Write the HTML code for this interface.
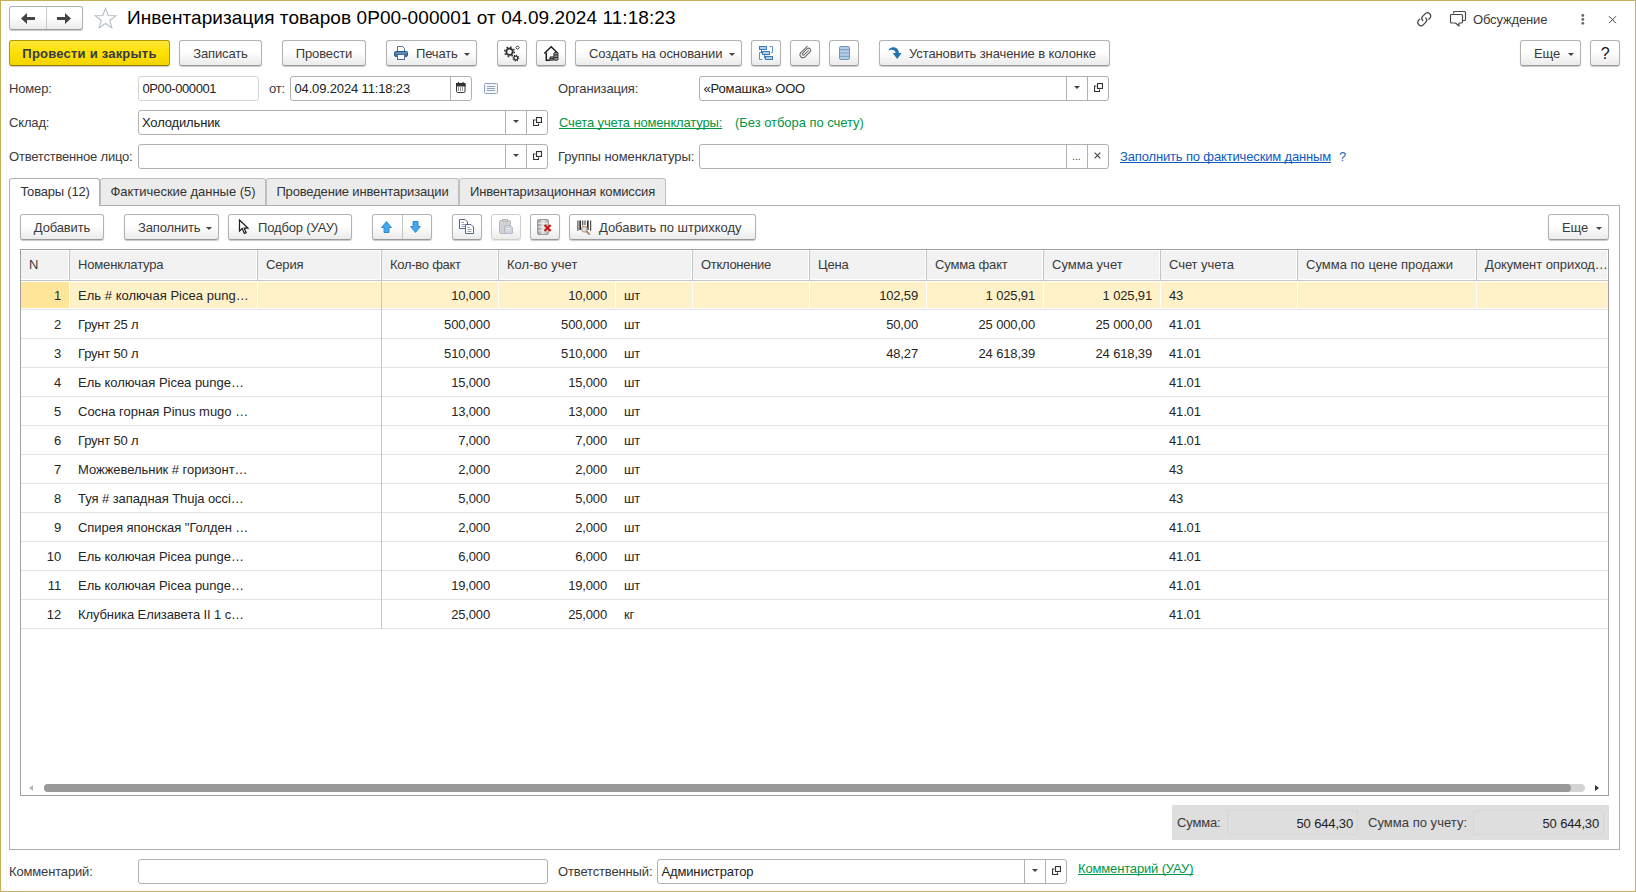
<!DOCTYPE html>
<html lang="ru">
<head>
<meta charset="utf-8">
<title>Инвентаризация товаров 0Р00-000001 от 04.09.2024 11:18:23</title>
<style>
*{box-sizing:border-box;margin:0;padding:0}
html,body{width:1636px;height:892px;overflow:hidden;background:#fff}
body{font-family:"Liberation Sans",sans-serif;font-size:13px;color:#333;position:relative;letter-spacing:-0.15px}
#frame{position:absolute;left:0;top:0;width:1636px;height:892px;border:1px solid #c2b05a;pointer-events:none;z-index:50}
.abs{position:absolute}
.lbl{position:absolute;height:24px;line-height:26px;white-space:nowrap;color:#3a3a3a}
.btn{position:absolute;height:26px;border:1px solid #b2b2b2;border-bottom-color:#9a9a9a;border-radius:3px;background:linear-gradient(#fff 0%,#fff 45%,#ebebeb 100%);box-shadow:0 1px 1px rgba(0,0,0,.22);line-height:26px;text-align:center;white-space:nowrap;color:#3a3a3a}
.btn.def{background:linear-gradient(#ffe93a 0%,#ffe000 50%,#f3d400 100%);border-color:#ad9a00;border-bottom-color:#8f7f00;font-weight:bold;color:#363a4a}
.btn svg{position:absolute}
.btn .t{position:absolute;top:0;height:24px;line-height:26px}
.arr{position:absolute;width:0;height:0;border-left:3.5px solid transparent;border-right:3.5px solid transparent;border-top:3.5px solid #444}
.inp{position:absolute;height:25px;border:1px solid #b0b0b0;border-radius:3px;background:#fff;line-height:23px;padding-left:3.5px;white-space:nowrap;color:#222;overflow:hidden}
.inp .sep{position:absolute;top:0;width:1px;height:23px;background:#b0b0b0}
.inp svg,.inp .arr{position:absolute}
a.g{position:absolute;color:#009646;text-decoration:underline;text-decoration-skip-ink:none;white-space:nowrap;height:24px;line-height:26px}
a.b{position:absolute;color:#0e5bbf;text-decoration:underline;text-decoration-skip-ink:none;white-space:nowrap;height:24px;line-height:26px}
.tab{position:absolute;top:178px;height:27px;border:1px solid #c0c0c0;border-bottom:none;background:#ececec;line-height:26px;text-align:center;white-space:nowrap;color:#333;border-radius:3px 3px 0 0}
.tab.act{background:#fff;height:28px;z-index:3;border-color:#b0b0b0}
#panel{position:absolute;left:9px;top:205px;width:1611px;height:645px;border:1px solid #b0b0b0;background:#fff}
#tbl{position:absolute;left:20px;top:249px;width:1589px;height:547px;border:1px solid #a0a0a0;background:#fff}
#thead{position:absolute;left:21px;top:250px;width:1587px;height:31px;background:#fff;border-bottom:1px solid #c6c6c6}
.th{position:absolute;top:251px;height:28px;line-height:27px;padding-left:8px;background:#f2f2f2;color:#3a3a3a;white-space:nowrap;overflow:hidden}
.vsep{position:absolute;top:250px;width:1px;height:31px;background:#c6c6c6}
.tr{position:absolute;left:21px;width:1587px;height:29px;border-bottom:1px solid #e2e2e2}
.td{position:absolute;top:1px;height:26px;line-height:28px;padding:0 8px;white-space:nowrap;overflow:hidden;color:#262626}
.td.r{text-align:right}
.tr.sel .td{background:#fff2c8}
.tr.sel .td.first{background:#ffe59a}
#fixline{position:absolute;left:381px;top:250px;width:1px;height:379px;background:#c6c6c6;z-index:4}
</style>
</head>
<body>
<!-- title bar -->
<div class="btn" style="left:9px;top:6px;width:74px;height:24px">
  <div class="abs" style="left:36px;top:0;width:1px;height:22px;background:#c9c9c9"></div>
  <svg style="left:11px;top:6px" width="14" height="11" viewBox="0 0 14 11"><path d="M0 5.5 L6 0 V4 H14 V7 H6 V11 Z" fill="#444"/></svg>
  <svg style="left:47px;top:6px" width="14" height="11" viewBox="0 0 14 11"><path d="M14 5.5 L8 0 V4 H0 V7 H8 V11 Z" fill="#444"/></svg>
</div>
<svg class="abs" style="left:94px;top:7px" width="23" height="22" viewBox="0 0 25 24"><path d="M12.5 1.5 L15.4 9.3 L23.6 9.6 L17.1 14.7 L19.4 22.6 L12.5 18 L5.6 22.6 L7.9 14.7 L1.4 9.6 L9.6 9.3 Z" fill="#fff" stroke="#b4bcc6" stroke-width="1.15" stroke-linejoin="miter"/></svg>
<div class="abs" id="title" style="left:127px;top:6px;height:24px;line-height:24px;font-size:19px;color:#000;white-space:nowrap;letter-spacing:0.08px">Инвентаризация товаров 0Р00-000001 от 04.09.2024 11:18:23</div>

<svg class="abs" style="left:1414.500px;top:10px" width="18.500" height="18.500" viewBox="0 0 17 17" fill="none" stroke="#4a4a4a" stroke-width="1.15" stroke-linecap="round"><path d="M7.2 9.8 a3 3 0 0 1 0 -4.2 l2.4 -2.4 a3 3 0 0 1 4.2 4.2 l-1.2 1.2"/><path d="M9.8 7.2 a3 3 0 0 1 0 4.2 l-2.4 2.4 a3 3 0 0 1 -4.2 -4.2 l1.2 -1.2"/></svg>
<svg class="abs" style="left:1449px;top:10px" width="18" height="18" viewBox="0 0 18 18" fill="none" stroke="#4a4a4a" stroke-width="1.2" stroke-linejoin="round"><path d="M4.5 3.5 V2.5 a1 1 0 0 1 1 -1 h10 a1 1 0 0 1 1 1 v7 a1 1 0 0 1 -1 1 h-1.5"/><path d="M2.5 4.5 h10 a1 1 0 0 1 1 1 v6.5 a1 1 0 0 1 -1 1 h-2.5 v3 l-3.5 -3 h-4 a1 1 0 0 1 -1 -1 v-6.5 a1 1 0 0 1 1 -1 z" fill="#fff"/></svg>
<div class="lbl" style="left:1473px;top:7px;color:#3a3a3a">Обсуждение</div>
<svg class="abs" style="left:1580px;top:13px" width="6" height="13" viewBox="0 0 6 13"><circle cx="2.800" cy="2.500" r="1.400" fill="#666"/><circle cx="2.800" cy="6.400" r="1.400" fill="#666"/><circle cx="2.800" cy="10.300" r="1.400" fill="#666"/></svg>
<svg class="abs" style="left:1608px;top:15px" width="9" height="9" viewBox="0 0 9 9" stroke="#444" stroke-width="1"><path d="M1 1.200 L8 8.200 M8 1.200 L1 8.200"/></svg>

<!-- command bar -->
<div class="btn def" style="left:9px;top:40px;width:161px;letter-spacing:0.22px">Провести и закрыть</div>
<div class="btn" style="left:179px;top:40px;width:83px">Записать</div>
<div class="btn" style="left:282px;top:40px;width:84px">Провести</div>
<div class="btn" style="left:386px;top:40px;width:91px"><span class="t" style="left:29px">Печать</span><div class="arr" style="left:77px;top:12px"></div>
 <svg style="left:7px;top:5px" width="14" height="14" viewBox="0 0 14 14"><path d="M3.5 5 V.5 H8.5 L10.5 2.5 V5" fill="#fff" stroke="#4a6f99"/><rect x=".5" y="5.5" width="13" height="5" rx="1.2" fill="#3c70a8" stroke="#2d5a8c"/><path d="M1.5 7 H12.5" stroke="#7ea6d0" stroke-width="1"/><rect x="3.5" y="8.5" width="7" height="5" fill="#fff" stroke="#4a6f99"/></svg>
</div>
<div class="btn" style="left:497px;top:40px;width:30px">
 <svg style="left:5px;top:4px" width="18" height="18" viewBox="0 0 18 18"><g fill="none" stroke="#333"><circle cx="6.5" cy="6.7" r="3.2" stroke-width="1.9"/><circle cx="6.5" cy="6.7" r="4.8" stroke-width="1.5" stroke-dasharray="1.6 2.17"/><circle cx="12.8" cy="13" r="1.9" stroke-width="1.3"/><circle cx="12.8" cy="13" r="2.9" stroke-width="1.1" stroke-dasharray="1.1 1.18"/><path d="M14.5 .8 L16.2 2.6 L14.5 4.4 L12.8 2.6 Z" stroke-width="1"/></g></svg>
</div>
<div class="btn" style="left:536px;top:40px;width:30px">
 <svg style="left:6px;top:4px" width="17" height="17" viewBox="0 0 17 17"><path d="M1.300 8.500 L8.200 1.700 L15 8.500" fill="none" stroke="#1c1c1c" stroke-width="1.5"/><path d="M3.300 7.500 V15.300 H7" fill="none" stroke="#1c1c1c" stroke-width="1.5"/><g fill="#8a8a8a" stroke="#222" stroke-width=".8"><rect x="6.800" y="11.800" width="4" height="3.500" rx=".8"/><rect x="10.800" y="7.500" width="4.200" height="7.800" rx="1"/></g><path d="M11 10 H15 M11 12.500 H15 M7 13.500 H10.500" stroke="#222" stroke-width=".8"/></svg>
</div>
<div class="btn" style="left:575px;top:40px;width:167px"><span class="t" style="left:13px;letter-spacing:-0.07px">Создать на основании</span><div class="arr" style="left:153px;top:12px"></div></div>
<div class="btn" style="left:751px;top:40px;width:30px">
 <svg style="left:6px;top:4px" width="16" height="16" viewBox="0 0 16 16" fill="none" stroke="#3c7db8" stroke-width="1"><rect x="1.5" y="1.5" width="7" height="3" fill="#b4cde8"/><rect x="4.5" y="6.5" width="7" height="3" fill="#b4cde8"/><rect x="7.5" y="11.5" width="7" height="3" fill="#b4cde8"/><path d="M3.5 4.5 V8 H4.5 M6.500 9.5 V13 H7.5" /><path d="M3 7.500 H1.500 V14.5 H4.5" stroke="#5b93c8"/><path d="M11.5 1.500 H14.500 V7.5 H13" stroke="#5b93c8"/></svg>
</div>
<div class="btn" style="left:790px;top:40px;width:30px">
 <svg style="left:7px;top:4px" width="15" height="16" viewBox="0 0 15 16" fill="none" stroke="#666" stroke-width="1.05" stroke-linecap="round"><path d="M9.200 1.300 L2.600 7.900 a3 3 0 0 0 4.200 4.200 L12.300 6.600 a2.150 2.150 0 0 0 -3 -3 L4.600 8.300 a1.150 1.150 0 0 0 1.600 1.600 L10.600 5.500"/></svg>
</div>
<div class="btn" style="left:829px;top:40px;width:30px">
 <svg style="left:9px;top:5px" width="11" height="14" viewBox="0 0 11 14"><rect x=".5" y=".5" width="10" height="13" rx="1.2" fill="#b7cde6" stroke="#6b95c2"/><path d="M1 3.700 H10 M1 7 H10 M1 10.300 H10" stroke="#7fa3cc" stroke-width="1.200"/></svg>
</div>
<div class="btn" style="left:879px;top:40px;width:231px"><span class="t" style="left:29px;letter-spacing:-0.1px">Установить значение в колонке</span>
 <svg style="left:8px;top:6px" width="14" height="13" viewBox="0 0 14 13"><path d="M.3 3.400 C1.200 1.400 3.200 .3 5.400 .3 C8.600 .3 10.800 2.600 10.900 6 L13.700 6 L9.200 11.900 L4.700 6 L7.600 6 C7.500 3.600 5.200 1.800 .3 3.400 Z" fill="#2272b4"/></svg>
</div>
<div class="btn" style="left:1520px;top:40px;width:61px"><span class="t" style="left:13px">Еще</span><div class="arr" style="left:47px;top:12px"></div></div>
<div class="btn" style="left:1590px;top:40px;width:30px;color:#111;font-size:16px;line-height:25px">?</div>

<!-- row 1 -->
<div class="lbl" style="left:9px;top:76px">Номер:</div>
<div class="inp" style="left:138px;top:76px;width:121px;border-color:#d5d5d5;letter-spacing:-0.4px">0P00-000001</div>
<div class="lbl" style="left:269px;top:76px">от:</div>
<div class="inp" style="left:290px;top:76px;width:182px">04.09.2024 11:18:23<div class="sep" style="left:159px"></div>
 <svg style="left:165px;top:5px" width="10" height="11" viewBox="0 0 10 11"><rect x=".5" y="1.500" width="8.500" height="9" rx="1.200" fill="#fff" stroke="#333"/><rect x=".5" y="1.500" width="8.500" height="2.500" fill="#333" stroke="#333"/><path d="M2.500 0 V2.500 M7 0 V2.500" stroke="#333" stroke-width="1.200"/><path d="M2 6 H8 M2 8 H8" stroke="#333" stroke-width="1" stroke-dasharray="1 1"/></svg>
</div>
<svg class="abs" style="left:484px;top:83px" width="14" height="11" viewBox="0 0 14 11"><rect x=".5" y=".5" width="13" height="10" rx="1" fill="#f4f7fb" stroke="#8fa3bd"/><path d="M3 3.5 H11 M3 5.5 H11 M3 7.5 H11" stroke="#8fa3bd" stroke-width="1"/></svg>
<div class="lbl" style="left:558px;top:76px">Организация:</div>
<div class="inp" style="left:699px;top:76px;width:410px">«Ромашка» ООО<div class="sep" style="left:366px"></div><div class="sep" style="left:387px"></div><div class="arr" style="left:373.500px;top:9px;border-width:3px 3px 0 3px"></div>
 <svg style="left:394px;top:6px" width="9" height="9" viewBox="0 0 9 9" fill="none" stroke="#333" stroke-width="1.1"><rect x="3.500" y=".55" width="5" height="4.900" fill="#fff"/><path d="M2.500 3 H.55 V8.450 H5.500 V6.500"/></svg>
</div>

<!-- row 2 -->
<div class="lbl" style="left:9px;top:110px">Склад:</div>
<div class="inp" style="left:138px;top:110px;width:410px;padding-left:3px">Холодильник<div class="sep" style="left:366px"></div><div class="sep" style="left:387px"></div><div class="arr" style="left:373.500px;top:9px;border-width:3px 3px 0 3px"></div>
 <svg style="left:394px;top:6px" width="9" height="9" viewBox="0 0 9 9" fill="none" stroke="#333" stroke-width="1.1"><rect x="3.500" y=".55" width="5" height="4.900" fill="#fff"/><path d="M2.500 3 H.55 V8.450 H5.500 V6.500"/></svg>
</div>
<a class="g" style="left:559px;top:110px">Счета учета номенклатуры:</a>
<div class="lbl" style="left:735px;top:110px;color:#009646;letter-spacing:-0.05px">(Без отбора по счету)</div>

<!-- row 3 -->
<div class="lbl" style="left:9px;top:144px;letter-spacing:-0.2px">Ответственное лицо:</div>
<div class="inp" style="left:138px;top:144px;width:410px"><div class="sep" style="left:366px"></div><div class="sep" style="left:387px"></div><div class="arr" style="left:373.500px;top:9px;border-width:3px 3px 0 3px"></div>
 <svg style="left:394px;top:6px" width="9" height="9" viewBox="0 0 9 9" fill="none" stroke="#333" stroke-width="1.1"><rect x="3.500" y=".55" width="5" height="4.900" fill="#fff"/><path d="M2.500 3 H.55 V8.450 H5.500 V6.500"/></svg>
</div>
<div class="lbl" style="left:558px;top:144px;letter-spacing:-0.075px">Группы номенклатуры:</div>
<div class="inp" style="left:699px;top:144px;width:410px"><div class="sep" style="left:366px"></div><div class="sep" style="left:387px"></div>
 <span class="abs" style="left:372px;top:0;font-size:11px;color:#555">...</span>
 <svg style="left:394px;top:7px" width="7" height="7" viewBox="0 0 7 7" stroke="#444" stroke-width="1.1"><path d="M.6 .7 L6.300 6.400 M6.300 .7 L.6 6.400"/></svg>
</div>
<a class="b" style="left:1120px;top:144px">Заполнить по фактическим данным</a>
<div class="lbl" style="left:1339px;top:144px;color:#1a66b8">?</div>

<!-- tabs -->
<div id="panel"></div>
<div class="tab act" style="left:9px;width:91px;letter-spacing:-0.2px;text-indent:1px">Товары (12)</div>
<div class="tab" style="left:100px;width:166px;letter-spacing:-0.03px">Фактические данные (5)</div>
<div class="tab" style="left:266px;width:193px">Проведение инвентаризации</div>
<div class="tab" style="left:459px;width:207px">Инвентаризационная комиссия</div>

<!-- table toolbar -->
<div class="btn" style="left:20px;top:214px;width:84px">Добавить</div>
<div class="btn" style="left:124px;top:214px;width:95px"><span class="t" style="left:13px">Заполнить</span><div class="arr" style="left:81px;top:12px"></div></div>
<div class="btn" style="left:228px;top:214px;width:124px"><span class="t" style="left:29px">Подбор (УАУ)</span>
 <svg style="left:9px;top:4px" width="11" height="16" viewBox="0 0 11 16"><path d="M1.500 1 V12 L4.200 9.600 L6.300 14.500 L8.200 13.700 L6.100 9 H9.800 Z" fill="#fff" stroke="#222" stroke-width="1.250"/></svg>
</div>
<div class="btn" style="left:372px;top:214px;width:60px">
 <div class="abs" style="left:29px;top:0;width:1px;height:24px;background:#c4c4c4"></div>
 <svg style="left:8px;top:6px" width="11" height="12" viewBox="0 0 11 12"><path d="M5.500 .6 L10.400 6.500 H8 V11.500 H3 V6.500 H.6 Z" fill="#45a8ea" stroke="#2284cf" stroke-width=".9"/></svg>
 <svg style="left:37px;top:6px" width="11" height="12" viewBox="0 0 11 12"><path d="M5.500 11.400 L10.400 5.500 H8 V.5 H3 V5.500 H.6 Z" fill="#45a8ea" stroke="#2284cf" stroke-width=".9"/></svg>
</div>
<div class="btn" style="left:452px;top:214px;width:30px">
 <svg style="left:6px;top:4px" width="16" height="16" viewBox="0 0 16 16" fill="#fff" stroke="#54688a" stroke-width="1"><path d="M.5 .5 H6 L8.500 3 V9.500 H.5 Z"/><path d="M2.500 3.500 H5 M2.500 5.500 H6.500 M2.500 7.500 H6.500" stroke="#8a9ab3" stroke-width=".9"/><path d="M6.500 5.500 H12 L14.500 8 V14.500 H6.500 Z"/><path d="M8.500 8.500 H11 M8.500 10.500 H12.500 M8.500 12.500 H12.500" stroke="#8a9ab3" stroke-width=".9"/></svg>
</div>
<div class="btn" style="left:491px;top:214px;width:30px;border-color:#cfcfcf;box-shadow:0 1px 1px rgba(0,0,0,.1)">
 <svg style="left:7px;top:4px" width="15" height="16" viewBox="0 0 15 16"><rect x=".5" y="1.500" width="11" height="13" rx="1" fill="#d2d2d2" stroke="#c4b4ac"/><rect x="3.500" y=".5" width="5" height="2" fill="#cfcfcf" stroke="#b9b9b9"/><path d="M5.500 6.500 H11.500 L13.500 8.500 V14.500 H5.500 Z" fill="#ccd3dc" stroke="#b3bcc8"/><path d="M7.500 9.500 H11.500 M7.500 11.500 H11.500" stroke="#e6eaef" stroke-width="1"/></svg>
</div>
<div class="btn" style="left:530px;top:214px;width:30px">
 <svg style="left:6px;top:4px" width="17" height="17" viewBox="0 0 17 17"><defs><linearGradient id="dg" x1="0" x2="1"><stop offset="0" stop-color="#8d8d8d"/><stop offset=".5" stop-color="#e6e6e6"/><stop offset="1" stop-color="#a8a8a8"/></linearGradient></defs><rect x=".5" y=".5" width="11" height="15" rx="1.500" fill="url(#dg)" stroke="#9a9a9a"/><path d="M1 4.200 H11 M1 8 H11 M1 11.800 H11" stroke="#f4f4f4" stroke-width="1"/><path d="M7.500 6 L13.700 12 M13.700 6 L7.500 12" stroke="#c81919" stroke-width="2.200"/></svg>
</div>
<div class="btn" style="left:569px;top:214px;width:187px"><span class="t" style="left:29px;letter-spacing:-0.03px">Добавить по штрихкоду</span>
 <svg style="left:7px;top:5px" width="16" height="16" viewBox="0 0 16 16"><path d="M.9 .5 V10.800 M13.700 .5 V10.800 M5.800 .5 V5.500 M8 .5 V5" stroke="#2a2a2a" stroke-width="1"/><path d="M3.200 .5 V10 M10.800 .5 V10" stroke="#2a2a2a" stroke-width="1.700"/><circle cx="7.400" cy="9.200" r="2.800" fill="#cfe0f5" stroke="#c39a78" stroke-width="1.100"/><path d="M9.600 11.400 L12.300 14.100" stroke="#b9804f" stroke-width="1.700" stroke-linecap="round"/></svg>
</div>
<div class="btn" style="left:1548px;top:214px;width:61px"><span class="t" style="left:13px">Еще</span><div class="arr" style="left:47px;top:12px"></div></div>

<!-- table -->
<div id="tbl"></div>
<div id="thead"></div>
<div class="th" style="left:21px;width:47px">N</div>
<div class="th" style="left:70px;width:186px">Номенклатура</div>
<div class="vsep" style="left:69px"></div>
<div class="th" style="left:258px;width:122px">Серия</div>
<div class="vsep" style="left:257px"></div>
<div class="th" style="left:382px;width:115px;letter-spacing:-0.27px">Кол-во факт</div>
<div class="vsep" style="left:381px"></div>
<div class="th" style="left:499px;width:192px;letter-spacing:0.03px">Кол-во учет</div>
<div class="vsep" style="left:498px"></div>
<div class="th" style="left:693px;width:115px;letter-spacing:-0.3px">Отклонение</div>
<div class="vsep" style="left:692px"></div>
<div class="th" style="left:810px;width:115px">Цена</div>
<div class="vsep" style="left:809px"></div>
<div class="th" style="left:927px;width:115px">Сумма факт</div>
<div class="vsep" style="left:926px"></div>
<div class="th" style="left:1044px;width:115px;letter-spacing:0.02px">Сумма учет</div>
<div class="vsep" style="left:1043px"></div>
<div class="th" style="left:1161px;width:135px;letter-spacing:-0.07px">Счет учета</div>
<div class="vsep" style="left:1160px"></div>
<div class="th" style="left:1298px;width:177px;letter-spacing:0.01px">Сумма по цене продажи</div>
<div class="vsep" style="left:1297px"></div>
<div class="th" style="left:1477px;width:130px;letter-spacing:-0.07px">Документ оприход…</div>
<div class="vsep" style="left:1476px"></div>
<div class="tr sel" style="top:281px">
<div class="td r first" style="left:0px;width:48px">1</div>
<div class="td " style="left:49px;width:187px;letter-spacing:0.03px">Ель # колючая Picea pung…</div>
<div class="td " style="left:237px;width:123px"></div>
<div class="td r" style="left:361px;width:116px">10,000</div>
<div class="td r" style="left:478px;width:116px">10,000</div>
<div class="td " style="left:595px;width:76px">шт</div>
<div class="td " style="left:672px;width:116px"></div>
<div class="td r" style="left:789px;width:116px">102,59</div>
<div class="td r" style="left:906px;width:116px">1 025,91</div>
<div class="td r" style="left:1023px;width:116px">1 025,91</div>
<div class="td " style="left:1140px;width:136px">43</div>
<div class="td " style="left:1277px;width:178px"></div>
<div class="td " style="left:1456px;width:131px"></div>
</div>
<div class="tr" style="top:310px">
<div class="td r first" style="left:0px;width:48px">2</div>
<div class="td " style="left:49px;width:187px;letter-spacing:-0.18px">Грунт 25 л</div>
<div class="td " style="left:237px;width:123px"></div>
<div class="td r" style="left:361px;width:116px">500,000</div>
<div class="td r" style="left:478px;width:116px">500,000</div>
<div class="td " style="left:595px;width:76px">шт</div>
<div class="td " style="left:672px;width:116px"></div>
<div class="td r" style="left:789px;width:116px">50,00</div>
<div class="td r" style="left:906px;width:116px">25 000,00</div>
<div class="td r" style="left:1023px;width:116px">25 000,00</div>
<div class="td " style="left:1140px;width:136px">41.01</div>
<div class="td " style="left:1277px;width:178px"></div>
<div class="td " style="left:1456px;width:131px"></div>
</div>
<div class="tr" style="top:339px">
<div class="td r first" style="left:0px;width:48px">3</div>
<div class="td " style="left:49px;width:187px;letter-spacing:-0.18px">Грунт 50 л</div>
<div class="td " style="left:237px;width:123px"></div>
<div class="td r" style="left:361px;width:116px">510,000</div>
<div class="td r" style="left:478px;width:116px">510,000</div>
<div class="td " style="left:595px;width:76px">шт</div>
<div class="td " style="left:672px;width:116px"></div>
<div class="td r" style="left:789px;width:116px">48,27</div>
<div class="td r" style="left:906px;width:116px">24 618,39</div>
<div class="td r" style="left:1023px;width:116px">24 618,39</div>
<div class="td " style="left:1140px;width:136px">41.01</div>
<div class="td " style="left:1277px;width:178px"></div>
<div class="td " style="left:1456px;width:131px"></div>
</div>
<div class="tr" style="top:368px">
<div class="td r first" style="left:0px;width:48px">4</div>
<div class="td " style="left:49px;width:187px;letter-spacing:-0.02px">Ель колючая Picea punge…</div>
<div class="td " style="left:237px;width:123px"></div>
<div class="td r" style="left:361px;width:116px">15,000</div>
<div class="td r" style="left:478px;width:116px">15,000</div>
<div class="td " style="left:595px;width:76px">шт</div>
<div class="td " style="left:672px;width:116px"></div>
<div class="td r" style="left:789px;width:116px"></div>
<div class="td r" style="left:906px;width:116px"></div>
<div class="td r" style="left:1023px;width:116px"></div>
<div class="td " style="left:1140px;width:136px">41.01</div>
<div class="td " style="left:1277px;width:178px"></div>
<div class="td " style="left:1456px;width:131px"></div>
</div>
<div class="tr" style="top:397px">
<div class="td r first" style="left:0px;width:48px">5</div>
<div class="td " style="left:49px;width:187px;letter-spacing:-0.01px">Сосна горная Pinus mugo …</div>
<div class="td " style="left:237px;width:123px"></div>
<div class="td r" style="left:361px;width:116px">13,000</div>
<div class="td r" style="left:478px;width:116px">13,000</div>
<div class="td " style="left:595px;width:76px">шт</div>
<div class="td " style="left:672px;width:116px"></div>
<div class="td r" style="left:789px;width:116px"></div>
<div class="td r" style="left:906px;width:116px"></div>
<div class="td r" style="left:1023px;width:116px"></div>
<div class="td " style="left:1140px;width:136px">41.01</div>
<div class="td " style="left:1277px;width:178px"></div>
<div class="td " style="left:1456px;width:131px"></div>
</div>
<div class="tr" style="top:426px">
<div class="td r first" style="left:0px;width:48px">6</div>
<div class="td " style="left:49px;width:187px;letter-spacing:-0.18px">Грунт 50 л</div>
<div class="td " style="left:237px;width:123px"></div>
<div class="td r" style="left:361px;width:116px">7,000</div>
<div class="td r" style="left:478px;width:116px">7,000</div>
<div class="td " style="left:595px;width:76px">шт</div>
<div class="td " style="left:672px;width:116px"></div>
<div class="td r" style="left:789px;width:116px"></div>
<div class="td r" style="left:906px;width:116px"></div>
<div class="td r" style="left:1023px;width:116px"></div>
<div class="td " style="left:1140px;width:136px">41.01</div>
<div class="td " style="left:1277px;width:178px"></div>
<div class="td " style="left:1456px;width:131px"></div>
</div>
<div class="tr" style="top:455px">
<div class="td r first" style="left:0px;width:48px">7</div>
<div class="td " style="left:49px;width:187px;letter-spacing:-0.04px">Можжевельник # горизонт…</div>
<div class="td " style="left:237px;width:123px"></div>
<div class="td r" style="left:361px;width:116px">2,000</div>
<div class="td r" style="left:478px;width:116px">2,000</div>
<div class="td " style="left:595px;width:76px">шт</div>
<div class="td " style="left:672px;width:116px"></div>
<div class="td r" style="left:789px;width:116px"></div>
<div class="td r" style="left:906px;width:116px"></div>
<div class="td r" style="left:1023px;width:116px"></div>
<div class="td " style="left:1140px;width:136px">43</div>
<div class="td " style="left:1277px;width:178px"></div>
<div class="td " style="left:1456px;width:131px"></div>
</div>
<div class="tr" style="top:484px">
<div class="td r first" style="left:0px;width:48px">8</div>
<div class="td " style="left:49px;width:187px;letter-spacing:-0.065px">Туя # западная Thuja occi…</div>
<div class="td " style="left:237px;width:123px"></div>
<div class="td r" style="left:361px;width:116px">5,000</div>
<div class="td r" style="left:478px;width:116px">5,000</div>
<div class="td " style="left:595px;width:76px">шт</div>
<div class="td " style="left:672px;width:116px"></div>
<div class="td r" style="left:789px;width:116px"></div>
<div class="td r" style="left:906px;width:116px"></div>
<div class="td r" style="left:1023px;width:116px"></div>
<div class="td " style="left:1140px;width:136px">43</div>
<div class="td " style="left:1277px;width:178px"></div>
<div class="td " style="left:1456px;width:131px"></div>
</div>
<div class="tr" style="top:513px">
<div class="td r first" style="left:0px;width:48px">9</div>
<div class="td " style="left:49px;width:187px;letter-spacing:-0.05px">Спирея японская "Голден …</div>
<div class="td " style="left:237px;width:123px"></div>
<div class="td r" style="left:361px;width:116px">2,000</div>
<div class="td r" style="left:478px;width:116px">2,000</div>
<div class="td " style="left:595px;width:76px">шт</div>
<div class="td " style="left:672px;width:116px"></div>
<div class="td r" style="left:789px;width:116px"></div>
<div class="td r" style="left:906px;width:116px"></div>
<div class="td r" style="left:1023px;width:116px"></div>
<div class="td " style="left:1140px;width:136px">41.01</div>
<div class="td " style="left:1277px;width:178px"></div>
<div class="td " style="left:1456px;width:131px"></div>
</div>
<div class="tr" style="top:542px">
<div class="td r first" style="left:0px;width:48px">10</div>
<div class="td " style="left:49px;width:187px;letter-spacing:-0.02px">Ель колючая Picea punge…</div>
<div class="td " style="left:237px;width:123px"></div>
<div class="td r" style="left:361px;width:116px">6,000</div>
<div class="td r" style="left:478px;width:116px">6,000</div>
<div class="td " style="left:595px;width:76px">шт</div>
<div class="td " style="left:672px;width:116px"></div>
<div class="td r" style="left:789px;width:116px"></div>
<div class="td r" style="left:906px;width:116px"></div>
<div class="td r" style="left:1023px;width:116px"></div>
<div class="td " style="left:1140px;width:136px">41.01</div>
<div class="td " style="left:1277px;width:178px"></div>
<div class="td " style="left:1456px;width:131px"></div>
</div>
<div class="tr" style="top:571px">
<div class="td r first" style="left:0px;width:48px">11</div>
<div class="td " style="left:49px;width:187px;letter-spacing:-0.02px">Ель колючая Picea punge…</div>
<div class="td " style="left:237px;width:123px"></div>
<div class="td r" style="left:361px;width:116px">19,000</div>
<div class="td r" style="left:478px;width:116px">19,000</div>
<div class="td " style="left:595px;width:76px">шт</div>
<div class="td " style="left:672px;width:116px"></div>
<div class="td r" style="left:789px;width:116px"></div>
<div class="td r" style="left:906px;width:116px"></div>
<div class="td r" style="left:1023px;width:116px"></div>
<div class="td " style="left:1140px;width:136px">41.01</div>
<div class="td " style="left:1277px;width:178px"></div>
<div class="td " style="left:1456px;width:131px"></div>
</div>
<div class="tr" style="top:600px">
<div class="td r first" style="left:0px;width:48px">12</div>
<div class="td " style="left:49px;width:187px;letter-spacing:-0.1px">Клубника Елизавета II 1 с…</div>
<div class="td " style="left:237px;width:123px"></div>
<div class="td r" style="left:361px;width:116px">25,000</div>
<div class="td r" style="left:478px;width:116px">25,000</div>
<div class="td " style="left:595px;width:76px">кг</div>
<div class="td " style="left:672px;width:116px"></div>
<div class="td r" style="left:789px;width:116px"></div>
<div class="td r" style="left:906px;width:116px"></div>
<div class="td r" style="left:1023px;width:116px"></div>
<div class="td " style="left:1140px;width:136px">41.01</div>
<div class="td " style="left:1277px;width:178px"></div>
<div class="td " style="left:1456px;width:131px"></div>
</div>
<div id="fixline"></div>

<!-- scrollbar -->
<div class="abs" style="left:44px;top:784px;width:1541px;height:8px;border-radius:4px;background:#d4d4d4"></div>
<div class="abs" style="left:44px;top:784px;width:1527px;height:8px;border-radius:4px;background:#999"></div>
<div class="abs" style="left:29px;top:784.500px;width:0;height:0;border-top:3.500px solid transparent;border-bottom:3.500px solid transparent;border-right:4px solid #b5b5b5"></div>
<div class="abs" style="left:1595px;top:784.500px;width:0;height:0;border-top:3.500px solid transparent;border-bottom:3.500px solid transparent;border-left:4px solid #333"></div>

<!-- totals -->
<div class="abs" style="left:1172px;top:805px;width:437px;height:35px;background:#dedede"></div>
<div class="lbl" style="left:1177px;top:810px">Сумма:</div>
<div class="abs" style="left:1227px;top:810px;width:131px;height:25px;border:1px solid #d6d6d6;border-radius:3px;line-height:25px;text-align:right;padding-right:4px;color:#222">50 644,30</div>
<div class="lbl" style="left:1368px;top:810px;letter-spacing:0.03px">Сумма по учету:</div>
<div class="abs" style="left:1473px;top:810px;width:131px;height:25px;border:1px solid #d6d6d6;border-radius:3px;line-height:25px;text-align:right;padding-right:4px;color:#222">50 644,30</div>

<!-- bottom -->
<div class="lbl" style="left:9px;top:859px">Комментарий:</div>
<div class="inp" style="left:138px;top:859px;width:410px"></div>
<div class="lbl" style="left:558px;top:859px">Ответственный:</div>
<div class="inp" style="left:657px;top:859px;width:410px">Администратор<div class="sep" style="left:366px"></div><div class="sep" style="left:387px"></div><div class="arr" style="left:373.500px;top:9px;border-width:3px 3px 0 3px"></div>
 <svg style="left:394px;top:6px" width="9" height="9" viewBox="0 0 9 9" fill="none" stroke="#333" stroke-width="1.1"><rect x="3.500" y=".55" width="5" height="4.900" fill="#fff"/><path d="M2.500 3 H.55 V8.450 H5.500 V6.500"/></svg>
</div>
<a class="g" style="left:1078px;top:856px">Комментарий (УАУ)</a>

<div id="frame"></div>
</body>
</html>
